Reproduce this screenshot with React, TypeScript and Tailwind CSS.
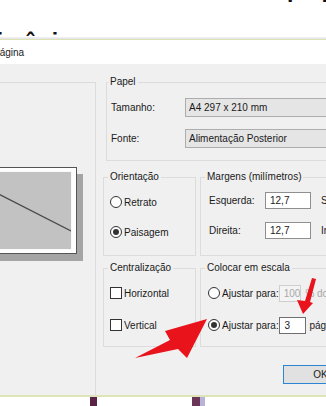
import type { ReactNode } from 'react'

function Group({ label, className, legendClass = 'ml-[4px]', children }: { label?: string; className: string; legendClass?: string; children?: ReactNode }) {
  return (
    <fieldset className={`min-w-0 border border-[#dcdcdc] ${className}`}>
      {label && <legend className={`${legendClass} px-[2px] leading-[12px]`}>{label}</legend>}
      {children}
    </fieldset>
  )
}

function Radio({ checked, label, className = '' }: { checked?: boolean; label: string; className?: string }) {
  return (
    <div className={`flex items-center h-[18px] ${className}`}>
      <span className="w-[12px] h-[12px] rounded-full border border-[#333] bg-white flex items-center justify-center shrink-0">
        {checked && <span className="w-[6px] h-[6px] rounded-full bg-[#333]" />}
      </span>
      <span className="ml-[2px]">{label}</span>
    </div>
  )
}

function Check({ label }: { label: string }) {
  return (
    <div className="flex items-center h-[18px]">
      <span className="w-[12px] h-[12px] border border-[#333] bg-white shrink-0" />
      <span className="ml-[2px]">{label}</span>
    </div>
  )
}

export default function App() {
  return (
    <div className="relative w-[326px] h-[406px] overflow-hidden bg-white font-['Liberation_Sans',Arial,sans-serif] text-[10px] text-[#1a1a1a] whitespace-nowrap">
      {/* page behind the dialog */}
      <div className="h-[37px] overflow-hidden font-bold text-[23px] leading-none text-[#111]">
        <div className="flex pl-[287px] gap-[28px] mt-[-17px]">
          <span>l</span>
          <span>l</span>
        </div>
        <div className="ml-[-48px] mt-[25px]">Patrimônio</div>
      </div>
      <div className="h-[2px] bg-gradient-to-b from-[#f2f2f2] to-[#e2e2e2]" />
      <div className="h-[1px] bg-[#dbe3b4]" />

      {/* title bar */}
      <div className="h-[24px] flex items-center">
        <span className="ml-[-7px]">Página</span>
      </div>

      {/* dialog body */}
      <div className="h-[331px] bg-[#f0f0f0] flex items-start pt-[12px]">
        <Group className="-ml-[25px] mt-[6px] w-[121px] h-[328px] shrink-0">
          <div className="flex justify-end pr-[18px] pt-[84px]">
            <div className="w-[117px] h-[87px] shrink-0 bg-white border border-[#555] shadow-[6px_7px_0_#a5a5a5] p-[4px] pr-[5px]">
              <div className="w-full h-full bg-[#c2c2c2] outline outline-1 outline-dotted outline-[#f4f4f4]">
                <svg width="106" height="75" viewBox="0 0 106 75" className="block">
                  <line x1="0" y1="5" x2="106" y2="59" stroke="#4a4a4a" strokeWidth="1.3" />
                </svg>
              </div>
            </div>
          </div>
        </Group>

        <div className="ml-[7px] flex flex-col shrink-0">
          <Group label="Papel" legendClass="ml-[1px]" className="ml-[3px] w-[240px] h-[85px]">
            <div className="flex flex-col gap-[12px] pt-[10px] pl-[4px]">
              <div className="flex items-center h-[19px]">
                <span className="w-[74px]">Tamanho:</span>
                <div className="flex-1 h-[19px] bg-[#e5e5e5] border border-[#adadad] flex items-center pl-[3px]">A4 297 x 210 mm</div>
              </div>
              <div className="flex items-center h-[19px]">
                <span className="w-[74px]">Fonte:</span>
                <div className="flex-1 h-[19px] bg-[#e5e5e5] border border-[#adadad] flex items-center pl-[3px]">Alimentação Posterior</div>
              </div>
            </div>
          </Group>

          <div className="flex mt-[10px]">
            <Group label="Orientação" className="w-[93px] h-[85px]">
              <div className="flex flex-col gap-[12px] pt-[10px] pl-[6px]">
                <Radio label="Retrato" />
                <Radio label="Paisagem" checked />
              </div>
            </Group>
            <Group label="Margens (milímetros)" className="ml-[4px] w-[200px] h-[85px]">
              <div className="flex flex-col gap-[13px] pt-[9px] pl-[8px]">
                <div className="flex items-center h-[17px]">
                  <span className="w-[56px]">Esquerda:</span>
                  <div className="w-[46px] h-[17px] bg-white border border-[#8f8f8f] flex items-center pl-[4px]">12,7</div>
                  <span className="ml-[10px]">Superior:</span>
                </div>
                <div className="flex items-center h-[17px]">
                  <span className="w-[56px]">Direita:</span>
                  <div className="w-[46px] h-[17px] bg-white border border-[#8f8f8f] flex items-center pl-[4px]">12,7</div>
                  <span className="ml-[10px]">Inferior:</span>
                </div>
              </div>
            </Group>
          </div>

          <div className="flex mt-[6px]">
            <Group label="Centralização" className="w-[93px] h-[85px]">
              <div className="flex flex-col gap-[14px] pt-[10px] pl-[6px]">
                <Check label="Horizontal" />
                <Check label="Vertical" />
              </div>
            </Group>
            <Group label="Colocar em escala" className="ml-[4px] w-[200px] h-[85px]">
              <div className="flex flex-col gap-[14px] pt-[10px] pl-[7px]">
                <div className="flex items-center h-[18px]">
                  <Radio label="Ajustar para:" className="w-[82px]" />
                  <div className="w-[29px] h-[17px] bg-[#f4f4f4] border border-[#cfcfcf] flex items-center pl-[4px] text-[#a8a8a8]">100</div>
                  <span className="ml-[4px] text-[#a8a8a8]">% do tamanho normal</span>
                </div>
                <div className="flex items-center h-[18px]">
                  <Radio label="Ajustar para:" checked className="w-[82px]" />
                  <div className="w-[29px] h-[17px] bg-white border border-[#6f6f6f] flex items-center pl-[4px]">3</div>
                  <span className="ml-[4px]">página(s) de largura</span>
                </div>
              </div>
            </Group>
          </div>

          <div className="ml-[180px] mt-[18px] w-[75px] h-[19px] bg-[#e1e1e1] border border-[#2b86d6] flex items-center justify-center">OK</div>
        </div>
      </div>

      <div className="h-[2px] bg-[#dde4b6]" />
      <div className="h-[9px] flex">
        <div className="ml-[90px] w-[7px] h-full bg-[#5b2447]" />
        <div className="ml-[95px] w-[8px] h-full bg-[#6b3558]" />
        <div className="w-[5px] h-full bg-[#b9b3d9]" />
      </div>

      {/* red arrows drawn on top of the screenshot */}
      <svg className="absolute inset-0 pointer-events-none" width="326" height="406" viewBox="0 0 326 406">
        <polygon points="135,358 170,340 165,331 207,319 187,358 178,349" fill="#e8131b" />
        <polygon points="312,278 316,279 310,302 313,303 303,314 297,300 305,301" fill="#e8131b" />
      </svg>
    </div>
  )
}
